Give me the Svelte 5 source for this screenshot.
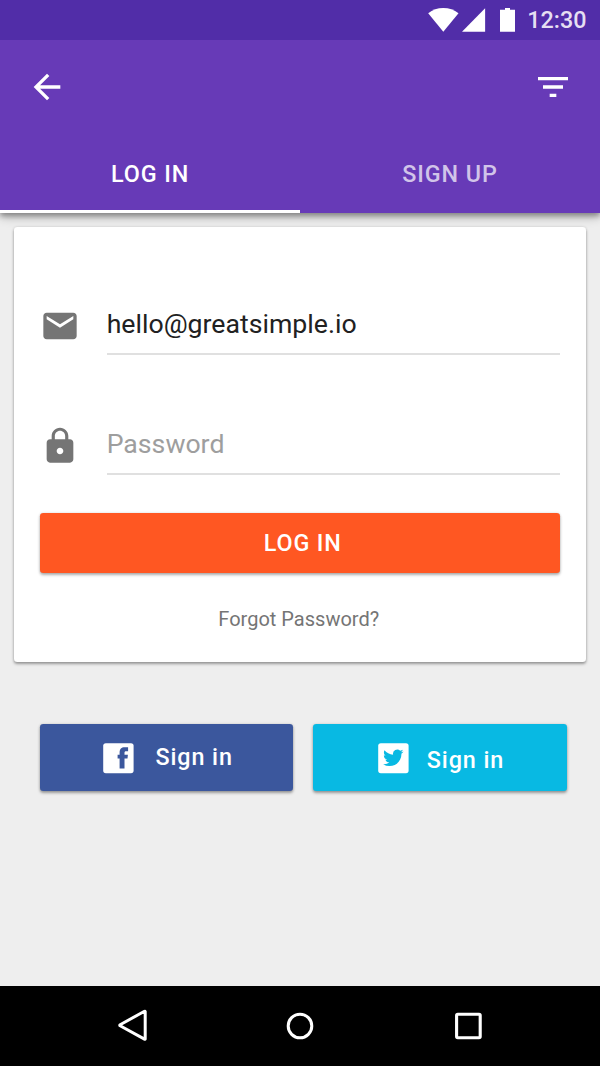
<script>
  let email = $state('hello@greatsimple.io');
  let password = $state('');
  let active = $state(0);
  const tabs = ['LOG IN', 'SIGN UP'];
</script>

<div class="screen">
  <header>
    <div class="status">
      <svg class="wifi" width="31" height="24" viewBox="0 0 31 24"><path d="M.2 5.3C4.5 1.9 9.6.1 15.3.1s10.9 1.8 15.2 5.2L15.3 23.8z" fill="#fff" /></svg>
      <svg class="signal" width="24" height="24" viewBox="0 0 24 24"><path d="M23.1.3v23.5H0z" fill="#fff" /></svg>
      <svg class="battery" width="15" height="24" viewBox="0 0 15 24"><path d="M5 0h5v1.7h5v22.1H0V1.7h5z" fill="#fff" /></svg>
      <span class="time">12:30</span>
    </div>
    <div class="toolbar">
      <svg class="icon" viewBox="0 0 24 24"><path d="M20 11H7.83l5.59-5.59L12 4l-8 8 8 8 1.41-1.41L7.83 13H20v-2z" fill="#fff" /></svg>
      <svg class="icon" viewBox="0 0 24 24"><path d="M10 18h4v-2h-4v2zM3 6v2h18V6H3zm3 7h12v-2H6v2z" fill="#fff" /></svg>
    </div>
    <nav class="tabs">
      {#each tabs as tab, i}
        <button class="tab" class:active={active === i} onclick={() => (active = i)}><span>{tab}</span></button>
      {/each}
    </nav>
  </header>

  <main>
    <section class="card">
      <label class="field">
        <svg class="icon" viewBox="0 0 24 24"><path d="M20 4H4c-1.1 0-1.99.9-1.99 2L2 18c0 1.1.9 2 2 2h16c1.1 0 2-.9 2-2V6c0-1.1-.9-2-2-2zm0 4l-8 5-8-5V6l8 5 8-5v2z" fill="#757575" /></svg>
        <input type="text" bind:value={email} />
      </label>
      <label class="field">
        <svg class="icon" viewBox="0 0 24 24"><path d="M18 8h-1V6c0-2.76-2.24-5-5-5S7 3.24 7 6v2H6c-1.1 0-2 .9-2 2v10c0 1.1.9 2 2 2h12c1.1 0 2-.9 2-2V10c0-1.1-.9-2-2-2zm-6 9c-1.1 0-2-.9-2-2s.9-2 2-2 2 .9 2 2-.9 2-2 2zm3.1-9H8.9V6c0-1.71 1.39-3.1 3.1-3.1 1.71 0 3.1 1.39 3.1 3.1v2z" fill="#757575" /></svg>
        <input type="password" placeholder="Password" bind:value={password} />
      </label>
      <button class="login">LOG IN</button>
      <a class="forgot" href="#forgot">Forgot Password?</a>
    </section>

    <div class="social">
      <button class="facebook">
        <svg width="31" height="31" viewBox="0 0 31 31"><rect x=".2" y=".2" width="30.4" height="30" rx="2.6" fill="#fff" /><path d="M16.6 25.6V15.6h-2v-3.9h2v-2c0-3.8 1.8-5.4 5-5.4h3.5v4h-1.9c-1.4 0-1.7.5-1.7 1.7v1.7h3.4l-.4 3.9h-3v10z" fill="#3b579d" /></svg>
        <span>Sign in</span>
      </button>
      <button class="twitter">
        <svg width="31" height="31" viewBox="0 0 31 31"><rect x=".2" y=".2" width="30.4" height="30" rx="2.6" fill="#fff" /><path transform="translate(5.1 4.6) scale(.85)" d="M23.95 4.57a10 10 0 0 1-2.82.77 4.96 4.96 0 0 0 2.16-2.72c-.95.55-2 .95-3.13 1.18a4.92 4.92 0 0 0-8.38 4.48C7.69 8.1 4.07 6.13 1.64 3.16a4.82 4.82 0 0 0-.67 2.48c0 1.7.87 3.2 2.19 4.09a4.9 4.9 0 0 1-2.23-.61v.06a4.92 4.92 0 0 0 3.95 4.83 5 5 0 0 1-2.21.08 4.94 4.94 0 0 0 4.6 3.42A9.87 9.87 0 0 1 0 19.54a13.99 13.99 0 0 0 7.55 2.21c9.05 0 14-7.5 14-13.98 0-.21 0-.42-.02-.63a9.94 9.94 0 0 0 2.46-2.55z" fill="#08b9e3" /></svg>
        <span>Sign in</span>
      </button>
    </div>
  </main>

  <footer>
    <svg width="32" height="34" viewBox="0 0 32 34"><path d="M29.2 2.6v27.4q-.2.4-.7.1L4.1 16.8q-.7-.6 0-1.1L28.5 2.3q.5-.2.7.3z" fill="none" stroke="#fff" stroke-width="3" stroke-linejoin="round" /></svg>
    <svg width="32" height="34" viewBox="0 0 32 34"><circle cx="16" cy="17" r="11.8" fill="none" stroke="#fff" stroke-width="3" /></svg>
    <svg width="32" height="34" viewBox="0 0 32 34"><rect x="4.6" y="5.2" width="23.6" height="23.6" rx="1.2" fill="none" stroke="#fff" stroke-width="3.1" /></svg>
  </footer>
</div>

<style>
  :global(body) { margin: 0; }
  .screen {
    width: 600px;
    height: 1066px;
    display: flex;
    flex-direction: column;
    overflow: hidden;
    background: #eee;
    font-family: Roboto, sans-serif;
  }
  button, input { font: inherit; border: 0; padding: 0; margin: 0; background: none; outline: none; }
  svg { display: block; flex: none; }
  .icon { width: 40px; height: 40px; }
  header {
    height: 213px;
    flex: none;
    display: flex;
    flex-direction: column;
    background: #673ab7;
    box-shadow: 0 4px 10px rgba(0, 0, 0, .24), 0 3px 5px rgba(0, 0, 0, .3);
  }
  .status {
    height: 40px;
    flex: none;
    box-sizing: border-box;
    display: flex;
    align-items: center;
    justify-content: flex-end;
    padding-right: 13.5px;
    background: #512da8;
  }
  .signal { margin-left: 3px; }
  .battery { margin-left: 14px; }
  .time { margin-left: 12.5px; color: #e5dff2; font-size: 23.33px; font-weight: 500; }
  .toolbar { height: 93px; flex: none; display: flex; align-items: center; justify-content: space-between; padding: 0 26.67px 0 26.5px; }
  .tabs { height: 80px; display: grid; grid-template-columns: 1fr 1fr; }
  .tab {
    box-sizing: border-box;
    border-bottom: 3px solid transparent;
    padding-top: 5px;
    color: #d1c4e9;
    font-size: 23.33px;
    font-weight: 500;
    letter-spacing: .9px;
  }
  .tab.active { color: #fff; border-bottom-color: #fff; }
  main { flex: 1; padding: 13.5px 14px 0 13.5px; }
  .card {
    height: 435.5px;
    box-sizing: border-box;
    padding: 66.5px 26px 0 26.5px;
    border-radius: 3.3px;
    background: #fff;
    box-shadow: 0 0 3px rgba(0, 0, 0, .12), 0 2px 3px rgba(0, 0, 0, .35);
    display: flex;
    flex-direction: column;
  }
  .field { height: 62px; margin-bottom: 58px; display: flex; }
  .field .icon { margin-top: 13.3px; }
  .field input {
    flex: 1;
    min-width: 0;
    margin-left: 26.7px;
    height: 62px;
    box-sizing: border-box;
    padding-top: 2px;
    border-bottom: 2px solid #e0e0e0;
    color: #212121;
    font-size: 26.67px;
  }
  .field input::placeholder { color: #9e9e9e; opacity: 1; }
  .field:nth-child(2) { margin-bottom: 38px; }
  .login {
    height: 60px;
    flex: none;
    padding-left: 5.5px;
    border-radius: 3.3px;
    background: #ff5722;
    color: #fff;
    font-size: 23.33px;
    font-weight: 500;
    letter-spacing: .85px;
    box-shadow: 0 0 3px rgba(0, 0, 0, .12), 0 2px 3px rgba(0, 0, 0, .3);
  }
  .forgot { margin-top: 34px; padding-right: 2.5px; text-align: center; color: #757575; font-size: 20px; text-decoration: none; }
  .social { display: grid; grid-template-columns: 253.3px 253.3px; gap: 20px; padding: 62.2px 0 0 26.5px; }
  .social button {
    height: 66.5px;
    display: flex;
    border-radius: 3.3px;
    color: #fff;
    font-size: 23.33px;
    line-height: 28px;
    font-weight: 500;
    letter-spacing: .9px;
    box-shadow: 0 0 3px rgba(0, 0, 0, .12), 0 2px 3px rgba(0, 0, 0, .35);
  }
  .social svg { margin-top: 18.5px; }
  .facebook { background: #3b579d; padding-left: 63px; }
  .facebook span { margin: 18.5px 0 0 21.5px; }
  .twitter { background: #08b9e3; padding-left: 64.5px; }
  .twitter span { margin: 21.5px 0 0 18px; }
  footer { height: 80px; flex: none; display: flex; align-items: center; justify-content: center; gap: 136px; background: #000; }
</style>
